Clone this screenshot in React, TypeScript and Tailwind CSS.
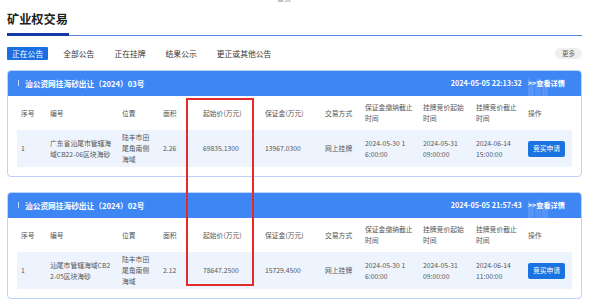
import React from 'react';

type Lot = {
  title: string;
  time: string;
  code: string[];
  place: string[];
  area: string;
  price: string;
  deposit: string;
  depositEnd: string[];
  start: string[];
  end: string[];
};

const lots: Lot[] = [
  {
    title: '汕公资网挂海砂出让（2024）03号',
    time: '2024-05-05 22:13:32',
    code: ['广东省汕尾市管辖海', '域CB22-06区块海砂'],
    place: ['陆丰市田', '尾角南侧', '海域'],
    area: '2.26',
    price: '69835.1300',
    deposit: '13967.0300',
    depositEnd: ['2024-05-30 1', '6:00:00'],
    start: ['2024-05-31', '09:00:00'],
    end: ['2024-06-14', '15:00:00'],
  },
  {
    title: '汕公资网挂海砂出让（2024）02号',
    time: '2024-05-05 21:57:43',
    code: ['汕尾市管辖海域CB2', '2-05区块海砂'],
    place: ['陆丰市田', '尾角南侧', '海域'],
    area: '2.12',
    price: '78647.2500',
    deposit: '15729.4500',
    depositEnd: ['2024-05-30 1', '6:00:00'],
    start: ['2024-05-31', '09:00:00'],
    end: ['2024-06-14', '11:00:00'],
  },
];

const tabs = ['正在公告', '全部公告', '正在挂牌', '结果公示', '更正或其他公告'];

const cols =
  'grid grid-cols-[29px_72px_41px_40px_62px_60px_40px_58px_53px_52px_1fr] items-center';

const Lines = ({ lines }: { lines: string[] }) => (
  <div className="pl-[4px]">
    {lines.map((l, i) => (
      <div key={i}>{l}</div>
    ))}
  </div>
);

const Cell = ({ children }: { children: React.ReactNode }) => (
  <div className="pl-[4px]">{children}</div>
);

const LotCard = ({ lot }: { lot: Lot }) => (
  <div className="rounded-[4px] border border-[#bcd3f7] overflow-hidden">
    <div className="relative h-[25px] bg-[#3d86f4] flex items-center justify-between pl-[10px] pr-[16px] text-white font-bold text-[7.7px]">
      <div className="flex items-center gap-[6px]">
        <span className="w-px h-[6px] bg-white/70" />
        <span>{lot.title}</span>
      </div>
      <svg
        className="absolute right-[33px] top-[3px]"
        width="20"
        height="22"
        viewBox="0 0 20 22"
      >
        <polygon points="0,4 6,9 6,22 0,22" fill="white" fillOpacity="0.13" />
        <polygon points="7,10 10,2 13,10 13,22 7,22" fill="white" fillOpacity="0.1" />
        <polygon points="14,9 20,4 20,22 14,22" fill="white" fillOpacity="0.13" />
      </svg>
      <div className="relative flex items-center gap-[6px] text-[7.2px]">
        <span>{lot.time}</span>
        <span>&gt;&gt;查看详情</span>
      </div>
    </div>
    <div className="px-[9px] pb-[9px] text-[6.8px] text-[#555] leading-[11px]">
      <div className={`${cols} h-[34px]`}>
        <Cell>序号</Cell>
        <Cell>编号</Cell>
        <Cell>位置</Cell>
        <Cell>面积</Cell>
        <Cell>起始价(万元)</Cell>
        <Cell>保证金(万元)</Cell>
        <Cell>交易方式</Cell>
        <Lines lines={['保证金缴纳截止', '时间']} />
        <Lines lines={['挂牌竞价起始', '时间']} />
        <Lines lines={['挂牌竞价截止', '时间']} />
        <Cell>操作</Cell>
      </div>
      <div className={`${cols} py-[2px] bg-[#eef4fe]`}>
        <Cell>1</Cell>
        <Lines lines={lot.code} />
        <Lines lines={lot.place} />
        <Cell>{lot.area}</Cell>
        <Cell>{lot.price}</Cell>
        <Cell>{lot.deposit}</Cell>
        <Cell>网上挂牌</Cell>
        <Lines lines={lot.depositEnd} />
        <Lines lines={lot.start} />
        <Lines lines={lot.end} />
        <Cell>
          <button className="w-[37px] h-[16px] rounded-[2px] bg-[#1a73e0] text-white text-[6.8px] leading-none">
            竞买申请
          </button>
        </Cell>
      </div>
    </div>
  </div>
);

export default function App() {
  return (
    <div className="relative w-[600px] h-[303px] overflow-hidden bg-white font-['Noto_Sans_CJK_SC','Noto_Sans',sans-serif]">
      <div className="absolute left-[277px] top-[-7px] text-[7px] text-[#999]">首页</div>

      <div className="pl-[7px] pr-[18px]">
        <h1 className="pt-[10px] text-[12.2px] leading-[18px] font-bold text-[#222]">矿业权交易</h1>

        <div className="mt-[5px] flex items-end">
          <div className="w-[62px] h-[3px] bg-[#1538a8]" />
          <div className="flex-1 h-px bg-[#5b86de]" />
        </div>

        <div className="mt-[11px] flex items-center justify-between">
          <div className="flex items-center gap-[10px] text-[7.8px]">
            {tabs.map((t, i) => (
              <span
                key={t}
                className={
                  i === 0
                    ? 'px-[5px] h-[13px] leading-[13px] rounded-[1px] bg-[#1c6fe3] text-white'
                    : 'px-[5px] h-[13px] leading-[13px] text-[#333]'
                }
              >
                {t}
              </span>
            ))}
          </div>
          <span className="w-[27px] h-[11px] leading-[11px] rounded-full bg-[#eeeeee] text-center text-[6.5px] text-[#666]">
            更多
          </span>
        </div>

        <div className="mt-[10px] flex flex-col gap-[15px]">
          {lots.map((lot) => (
            <LotCard key={lot.title} lot={lot} />
          ))}
        </div>
      </div>

      {/* annotation box */}
      <div className="absolute left-[186px] top-[98px] w-[68px] h-[188px] border-2 border-[#e32b2b]" />
    </div>
  );
}
